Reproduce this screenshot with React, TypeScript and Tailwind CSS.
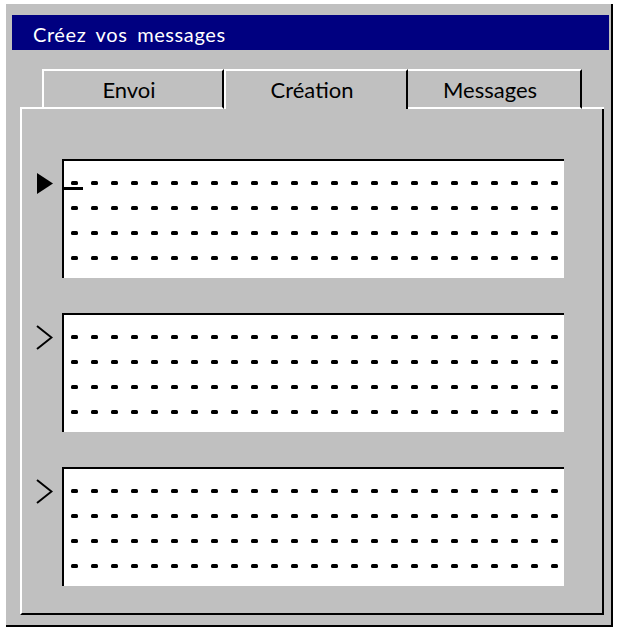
import React from "react"

const DASHES = Array.from({ length: 25 }, (_, i) => i)
const LINES = [0, 1, 2, 3]

function Marker({ active }: { active: boolean }) {
  if (active) {
    return (
      <svg width="16" height="21" viewBox="0 0 16 21" className="ml-[15px] mt-[14px]">
        <polygon points="0,0 16,10.5 0,21" fill="#000" />
      </svg>
    )
  }
  return (
    <svg width="17" height="25" viewBox="0 0 17 25" className="ml-[14px] mt-[12px]">
      <polyline points="1,1 15.5,12.5 1,24" fill="none" stroke="#000" strokeWidth="2" />
    </svg>
  )
}

function MessageBox({ active }: { active: boolean }) {
  return (
    <div className="flex">
      <div className="w-[40px]">
        <Marker active={active} />
      </div>
      <div className="relative w-[502px] h-[119px] bg-white border-t-2 border-l-2 border-black">
        <div className="flex flex-col gap-[21px] pt-[20px] pl-[7px]">
          {LINES.map((l) => (
            <div key={l} className="flex gap-[13px]">
              {DASHES.map((d) => (
                <span key={d} className="w-[7px] h-[4px] rounded-[1.5px] bg-black" />
              ))}
            </div>
          ))}
        </div>
        {active && <div className="absolute left-0 top-[26px] w-[19px] h-[3px] bg-black" />}
      </div>
    </div>
  )
}

export default function App() {
  return (
    <div className="w-[621px] h-[634px] bg-white pt-[4px] pl-[6px] font-['Lato',sans-serif]">
      <div className="w-[607px] h-[623px] bg-[#c0c0c0] border-r-2 border-b-2 border-black flex flex-col">
        {/* Title bar */}
        <div className="mt-[11px] ml-[6px] mr-[2px] h-[35px] bg-[#000080] flex items-center pl-[21px] pt-[3px]">
          <span className="text-white text-[20px] tracking-[0.6px] [word-spacing:4px]">Créez vos messages</span>
        </div>

        <div className="mt-[19px] ml-[14px] mr-[7px]">
          {/* Tabs */}
          <div className="flex h-[40px] text-[22px] text-black">
            <div className="w-[22px] border-b-2 border-b-white" />
            <div className="w-[182px] flex items-center justify-center pr-[8px] border-t-2 border-l-2 border-b-2 border-r-2 border-t-white border-l-white border-b-white border-r-black">
              Envoi
            </div>
            <div className="w-[184px] flex items-center justify-center pr-[8px] pb-[2px] border-t-2 border-l-2 border-r-2 border-t-white border-l-white border-r-black">
              Création
            </div>
            <div className="w-[174px] flex items-center justify-center pr-[8px] border-t-2 border-b-2 border-r-2 border-t-white border-b-white border-r-black">
              Messages
            </div>
            <div className="flex-1 border-b-2 border-b-white" />
          </div>

          {/* Panel */}
          <div className="h-[506px] border-l-2 border-r-2 border-b-2 border-l-white border-r-black border-b-black pt-[50px] flex flex-col gap-[35px]">
            <MessageBox active />
            <MessageBox active={false} />
            <MessageBox active={false} />
          </div>
        </div>
      </div>
    </div>
  )
}
